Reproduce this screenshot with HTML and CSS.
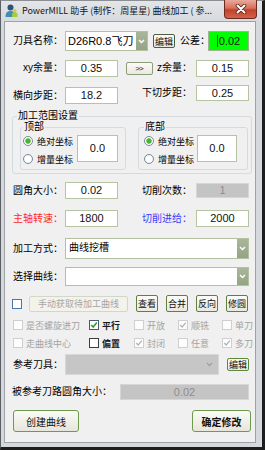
FILE: index.html
```html
<!DOCTYPE html>
<html lang="zh-CN">
<head>
<meta charset="utf-8">
<title>PowerMILL 助手</title>
<link rel="stylesheet" href="styles.css">
</head>
<body>
<div class="window">
  <div class="titlebar">
    <svg class="app-icon" width="13" height="14" viewBox="0 0 13 14">
      <circle cx="5.5" cy="3.6" r="3" fill="#27557a"/>
      <path d="M0.5 13 C0.5 8.5 2.5 7 5.5 7 C8.5 7 10 8.5 10 11 L10 13 Z" fill="#3c8fb5"/>
      <path d="M7 13 L7 10 C7 8.8 8 8.2 9.5 8.2 C11 8.2 12.5 8.8 12.5 10 L12.5 13 Z" fill="#9fcf3a"/>
      <circle cx="9.8" cy="6.6" r="1.7" fill="#e0c640"/>
    </svg>
    <span class="title">PowerMILL 助手 (制作：周星星) 曲线加工 ( 参...</span>
    <div class="close">
      <svg width="12" height="10" viewBox="0 0 12 10">
        <path d="M2.5 1.5 L9.5 8.5 M9.5 1.5 L2.5 8.5" stroke="#5a2218" stroke-width="3.6" stroke-linecap="round"/>
        <path d="M2.5 1.5 L9.5 8.5 M9.5 1.5 L2.5 8.5" stroke="#ffffff" stroke-width="2" stroke-linecap="round"/>
      </svg>
    </div>
  </div>

  <div class="client">
    <div class="row r1">
      <span class="lbl">刀具名称：</span>
      <div class="combo combo-tool">
        <span class="combo-text">D26R0.8飞刀</span>
        <span class="arrow"><svg width="7" height="5" viewBox="0 0 7 5"><path d="M1 1 L3.5 3.6 L6 1" fill="none" stroke="#fff" stroke-width="1.4"/></svg></span>
      </div>
      <span class="btn btn-edit">编辑</span>
      <span class="lbl-tol">公差：</span>
      <div class="field field-tol"><span class="caret"></span>0.02</div>
    </div>

    <div class="row r2">
      <span class="lbl">xy余量：</span>
      <div class="field w53">0.35</div>
      <div class="mid">
        <span class="btn btn-arrow">&gt;&gt;</span>
        <span class="lbl-r">z余量：</span>
      </div>
      <div class="field w53">0.15</div>
    </div>

    <div class="row r3">
      <span class="lbl bot h17">横向步距：</span>
      <div class="field w53 bot">18.2</div>
      <div class="mid top h16">
        <span class="lbl-r">下切步距：</span>
      </div>
      <div class="field w53 top h16">0.25</div>
    </div>

    <fieldset class="group">
      <legend>加工范围设置</legend>
      <div class="group-inner">
        <fieldset class="sub sub-top">
          <legend>顶部</legend>
          <div class="sub-body">
            <div class="radios">
              <div class="radio-row"><i class="radio on"></i><span>绝对坐标</span></div>
              <div class="radio-row"><i class="radio"></i><span>增量坐标</span></div>
            </div>
            <div class="field big w41">0.0</div>
          </div>
        </fieldset>
        <fieldset class="sub sub-bottom">
          <legend>底部</legend>
          <div class="sub-body">
            <div class="radios">
              <div class="radio-row"><i class="radio on"></i><span>绝对坐标</span></div>
              <div class="radio-row"><i class="radio"></i><span>增量坐标</span></div>
            </div>
            <div class="field big w40">0.0</div>
          </div>
        </fieldset>
      </div>
    </fieldset>

    <div class="row r4">
      <span class="lbl">圆角大小：</span>
      <div class="field w53">0.02</div>
      <div class="mid">
        <span class="lbl-r">切削次数：</span>
      </div>
      <div class="field w53 disabled h15">1</div>
    </div>

    <div class="row r5">
      <span class="lbl red">主轴转速：</span>
      <div class="field w53">1800</div>
      <div class="mid">
        <span class="lbl-r blue">切削进给：</span>
      </div>
      <div class="field w53">2000</div>
    </div>

    <div class="row r6">
      <span class="lbl">加工方式：</span>
      <div class="combo combo-wide">
        <span class="combo-text cjk">曲线挖槽</span>
        <span class="arrow"><svg width="7" height="5" viewBox="0 0 7 5"><path d="M1 1 L3.5 3.6 L6 1" fill="none" stroke="#fff" stroke-width="1.4"/></svg></span>
      </div>
    </div>

    <div class="row r7">
      <span class="lbl">选择曲线：</span>
      <div class="combo combo-wide">
        <span class="combo-text"></span>
        <span class="arrow"><svg width="7" height="5" viewBox="0 0 7 5"><path d="M1 1 L3.5 3.6 L6 1" fill="none" stroke="#fff" stroke-width="1.4"/></svg></span>
      </div>
    </div>

    <div class="row r8">
      <i class="cb cb-blue"></i>
      <span class="btn btn-disabled">手动获取待加工曲线</span>
      <span class="btn btn-tool">查看</span>
      <span class="btn btn-tool">合并</span>
      <span class="btn btn-tool">反向</span>
      <span class="btn btn-tool">修圆</span>
    </div>

    <div class="chk-row cr1">
      <span class="chk c1"><i class="cb"></i><span class="dis">是否螺旋进刀</span></span>
      <span class="chk c2"><i class="cb cb-dark"><svg width="8" height="8" viewBox="0 0 8 8"><path d="M1.2 4 L3.2 6 L6.8 1.6" fill="none" stroke="#2f9b2f" stroke-width="1.6"/></svg></i><span class="strong">平行</span></span>
      <span class="chk c3"><i class="cb"></i><span class="dis">开放</span></span>
      <span class="chk c4"><i class="cb"><svg width="8" height="8" viewBox="0 0 8 8"><path d="M1.2 4 L3.2 6 L6.8 1.6" fill="none" stroke="#b4b4b4" stroke-width="1.3"/></svg></i><span class="dis">顺铣</span></span>
      <span class="chk c5"><i class="cb"></i><span class="dis">单刀</span></span>
    </div>
    <div class="chk-row cr2">
      <span class="chk c1"><i class="cb"></i><span class="dis">走曲线中心</span></span>
      <span class="chk c2"><i class="cb cb-black"></i><span class="strong">偏置</span></span>
      <span class="chk c3"><i class="cb"><svg width="8" height="8" viewBox="0 0 8 8"><path d="M1.2 4 L3.2 6 L6.8 1.6" fill="none" stroke="#b4b4b4" stroke-width="1.3"/></svg></i><span class="dis">封闭</span></span>
      <span class="chk c4"><i class="cb"></i><span class="dis">任意</span></span>
      <span class="chk c5"><i class="cb"><svg width="8" height="8" viewBox="0 0 8 8"><path d="M1.2 4 L3.2 6 L6.8 1.6" fill="none" stroke="#b4b4b4" stroke-width="1.3"/></svg></i><span class="dis">多刀</span></span>
    </div>

    <div class="row r9">
      <span class="lbl">参考刀具：</span>
      <div class="combo combo-ref">
        <span class="combo-text"></span>
        <span class="arrow-dis"><svg width="7" height="5" viewBox="0 0 7 5"><path d="M1 1 L3.5 3.6 L6 1" fill="none" stroke="#9c9c9c" stroke-width="1.1"/></svg></span>
      </div>
      <span class="btn btn-edit2">编辑</span>
    </div>

    <div class="row r10">
      <span class="lbl-long">被参考刀路圆角大小：</span>
      <div class="field disabled w129">0.02</div>
    </div>

    <div class="row r11">
      <span class="btn btn-big btn-create">创建曲线</span>
      <span class="btn btn-big btn-ok">确定修改</span>
    </div>
  </div>
</div>
</body>
</html>
```

FILE: styles.css
```css
* { box-sizing: border-box; }
html, body { margin: 0; padding: 0; }
body {
  width: 265px;
  height: 450px;
  overflow: hidden;
  background: #ffffff;
  font-family: "Liberation Sans", "Noto Sans CJK SC", sans-serif;
  color: #000;
}

.window {
  width: 265px;
  height: 450px;
  display: flex;
  flex-direction: column;
  background: #d5d8dc;
  border-top: 1px solid #8b8f94;
  border-left: 1px solid #5b5e62;
  border-right: 3px solid #1d1d1d;
  border-bottom: 3px solid #1d1d1d;
}

/* title bar */
.titlebar {
  height: 20px;
  flex-shrink: 0;
  display: flex;
  align-items: center;
  background: linear-gradient(#e3e5e8, #d7dade);
}
.app-icon { margin-left: 4px; flex-shrink: 0; }
.title {
  margin-left: 4px;
  font-family: "Noto Sans CJK SC", "Liberation Sans", sans-serif;
  font-size: 9px;
  line-height: 12px;
  white-space: nowrap;
  color: #151515;
}
.close {
  margin-left: auto;
  margin-right: 5px;
  align-self: flex-start;
  margin-top: -1px;
  width: 33px;
  height: 19px;
  flex-shrink: 0;
  border: 1px solid #6d2a20;
  border-top: none;
  border-radius: 0 0 4px 4px;
  background: linear-gradient(#e9a99c 0%, #d8705c 45%, #c4402a 55%, #d2634a 100%);
  display: flex;
  align-items: center;
  justify-content: center;
}

/* client area */
.client {
  margin-left: 3px;
  width: 252px;
  height: 422px;
  flex-shrink: 0;
  border: 1px solid #9ea2a6;
  background: #f0f0f0;
  padding: 9px 0 0 7px;
  display: flex;
  flex-direction: column;
}

.row { display: flex; align-items: center; flex-shrink: 0; }
.top { align-self: flex-start; }
.bot { align-self: flex-end; }
.h15 { height: 15px !important; line-height: 13px !important; }
.h16 { height: 16px !important; line-height: 14px !important; }
.h17 { height: 17px; line-height: 17px; }

.lbl {
  width: 51px;
  margin-right: 2px;
  text-align: right;
  font-size: 10px;
  line-height: 14px;
  white-space: nowrap;
  flex-shrink: 0;
}
.lbl.h17 { line-height: 17px; }
.lbl-r { font-size: 10px; line-height: 14px; white-space: nowrap; }
.red { color: #ff2a2a; }
.blue { color: #3a3aff; }

.mid {
  width: 78px;
  flex-shrink: 0;
  display: flex;
  align-items: center;
  justify-content: flex-end;
  padding-right: 4px;
}
.mid.h16 { height: 16px; }

.field {
  height: 17px;
  border: 1px solid #b7c4a4;
  background: #ffffff;
  font-size: 11px;
  line-height: 15px;
  text-align: center;
  flex-shrink: 0;
  color: #111;
}
.w53 { width: 53px; }
.w41 { width: 41px; }
.w40 { width: 40px; }
.w129 { width: 129px; }
.field.disabled {
  background: #c4c4c4;
  border-color: #d6d6d6;
  color: #8e8e8e;
}

/* row 1 */
.r1 { height: 20px; }
.combo {
  display: flex;
  align-items: stretch;
  border: 1px solid #b3c1a0;
  background: #ffffff;
  flex-shrink: 0;
}
.combo-tool { width: 83px; height: 20px; }
.combo-text {
  padding-left: 2px;
  font-size: 11px;
  line-height: 18px;
  white-space: nowrap;
  flex: 1;
}
.combo-text.cjk { font-size: 10px; padding-left: 3px; }
.arrow {
  width: 11px;
  background: linear-gradient(#a9b69a, #95a485);
  display: flex;
  align-items: center;
  justify-content: center;
}
.arrow-dis {
  width: 14px;
  display: flex;
  align-items: center;
  justify-content: center;
  margin-right: 2px;
}

.btn {
  display: flex;
  align-items: center;
  justify-content: center;
  flex-shrink: 0;
  white-space: nowrap;
  font-size: 9px;
  color: #111;
  border: 1px solid #5f7f3e;
  border-radius: 2px;
  background: linear-gradient(#fbfbf7, #e9e9e0);
}
.btn-edit {
  width: 22px;
  height: 14px;
  margin-left: 5px;
  border-color: #4f5d43;
}
.lbl-tol {
  width: 28px;
  margin-left: 5px;
  font-size: 10px;
  line-height: 14px;
  white-space: nowrap;
  flex-shrink: 0;
}
.field-tol {
  width: 41px;
  height: 20px;
  background: #00ff00;
  border-color: #9fb48e;
  line-height: 18px;
  display: flex;
  align-items: center;
  justify-content: center;
}
.caret {
  width: 1px;
  height: 12px;
  background: #3c3c3c;
  margin-right: 1px;
}

/* row 2 */
.r2 { height: 18px; margin-top: 8px; }
.btn-arrow {
  width: 27px;
  height: 13px;
  margin-left: 8px;
  margin-right: auto;
  border-color: #8e9c7a;
  font-size: 8px;
  letter-spacing: -1px;
  padding-right: 1px;
}

/* row 3 */
.r3 { height: 19px; margin-top: 8px; align-items: stretch; }
.r3 .field.bot { align-self: flex-end; }

/* group box */
.group {
  margin: 7px 0 0 0;
  width: 240px;
  padding: 0 3px 3px 7px;
  border: 1px solid #d3dbe0;
  border-radius: 3px;
  flex-shrink: 0;
}
.group > legend {
  font-size: 10px;
  line-height: 10px;
  padding: 0 1px;
  margin-left: -3px;
  white-space: nowrap;
}
.group-inner {
  display: flex;
  gap: 12px;
  margin-top: 1px;
}
.sub {
  margin: 0;
  border: 1px solid #d3dbe0;
  border-radius: 3px;
  padding: 0 0 1px 2px;
}
.sub > legend {
  font-size: 10px;
  line-height: 10px;
  padding: 0 1px;
  white-space: nowrap;
}
.sub-top { width: 106px; }
.sub-bottom { width: 110px; padding-left: 5px; }
.sub-body { display: flex; align-items: flex-start; }
.radios { display: flex; flex-direction: column; width: 54px; flex-shrink: 0; }
.sub-bottom .radios { width: 53px; }
.radio-row {
  height: 18px;
  display: flex;
  align-items: center;
  font-size: 9px;
  white-space: nowrap;
}
.radio-row span { margin-left: 4px; }
.radio {
  width: 10px;
  height: 10px;
  border-radius: 50%;
  border: 1px solid #7b8a99;
  background: radial-gradient(circle, #ffffff 0 45%, #e2e7ec 100%);
  flex-shrink: 0;
}
.radio.on {
  background: radial-gradient(circle, #48b430 0 2.3px, #bfe5b0 2.8px, #ffffff 3.4px, #e6eaee 100%);
}
.field.big {
  height: 27px;
  line-height: 25px;
  margin-top: 3px;
}

/* rows after group */
.r4 { height: 17px; margin-top: 8px; }
.r5 { height: 17px; margin-top: 11px; }
.r6 { height: 21px; margin-top: 11px; }
.combo-wide { width: 184px; height: 21px; }
.r7 { height: 19px; margin-top: 8px; }
.r7 .combo-wide { height: 19px; }

.r8 { height: 17px; margin-top: 9px; }
.cb {
  width: 10px;
  height: 10px;
  border: 1px solid #cfcfcf;
  background: #fdfdfd;
  flex-shrink: 0;
  display: flex;
  align-items: center;
  justify-content: center;
}
.cb-blue { border-color: #4b74ad; background: #ffffff; }
.cb-dark { border-color: #4b5b6e; background: #ffffff; }
.cb-black { border-color: #3d3d3d; background: #ffffff; }
.btn-disabled {
  width: 99px;
  height: 16px;
  margin-left: 7px;
  border-color: #d2d8c8;
  background: #f3f3ec;
  color: #a6a6a6;
}
.btn-tool { width: 22px; height: 17px; margin-left: 8px; }
.btn-tool + .btn-tool { margin-left: 8px; }
.r8 .btn-disabled + .btn-tool { margin-left: 8px; }

.chk-row {
  display: flex;
  height: 18px;
  align-items: center;
  flex-shrink: 0;
  padding-left: 1px;
}
.cr1 { margin-top: 4px; }
.chk {
  display: flex;
  align-items: center;
  font-size: 9px;
  white-space: nowrap;
  flex-shrink: 0;
}
.chk > span { margin-left: 3px; }
.c1 { width: 76px; }
.c2 { width: 45px; }
.c3 { width: 44px; }
.c4 { width: 44px; }
.dis { color: #a3a3a3; }
.strong { font-weight: bold; color: #1a1a1a; }

.r9 { height: 21px; margin-top: 2px; }
.combo-ref {
  width: 154px;
  height: 21px;
  background: #c6c6c6;
  border-color: #d8d8d8;
}
.btn-edit2 {
  width: 22px;
  height: 13px;
  margin-left: 8px;
  border-color: #5c8a38;
}

.r10 { height: 16px; margin-top: 9px; }
.r10 .field { height: 16px; line-height: 14px; }
.lbl-long {
  width: 108px;
  font-size: 10px;
  line-height: 14px;
  white-space: nowrap;
  flex-shrink: 0;
}

.r11 {
  height: 22px;
  margin-top: 10px;
  padding-left: 1px;
}
.btn-big {
  height: 22px;
  font-size: 10px;
  border: 1px solid #6f9a4c;
  border-radius: 3px;
  background: linear-gradient(#fbfbf7, #e6e6dc);
}
.btn-create { width: 66px; }
.btn-ok { width: 59px; margin-left: 113px; font-weight: bold; }
```
